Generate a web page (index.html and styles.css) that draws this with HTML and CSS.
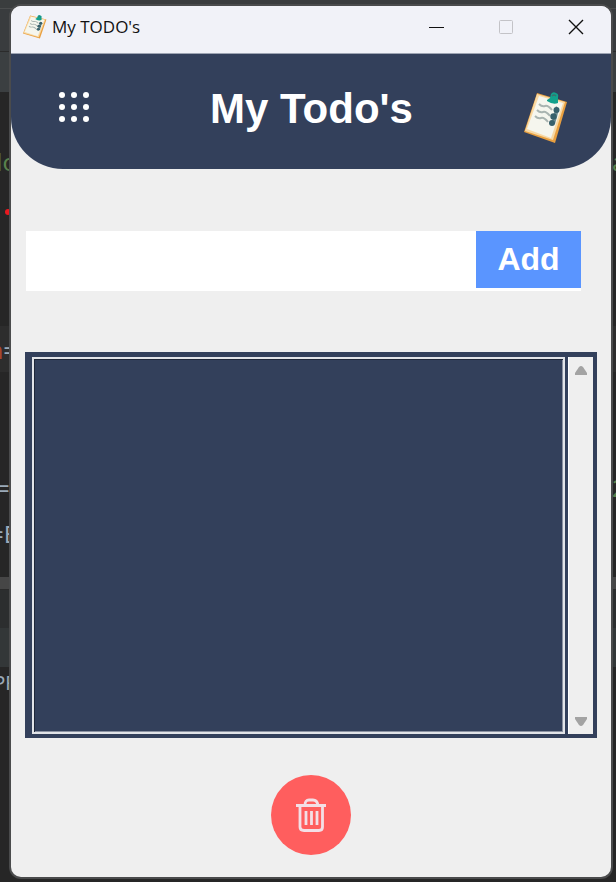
FILE: index.html
```html
<!DOCTYPE html>
<html lang="en">
<head>
<meta charset="utf-8">
<title>My TODO's</title>
<link rel="stylesheet" href="styles.css">
</head>
<body>
<svg class="defs" aria-hidden="true">
  <symbol id="clipboard" viewBox="0 0 44 52" preserveAspectRatio="none">
    <path d="M13 1 43 10 31 51 0 40Z" fill="#e9a040"/>
    <path d="M13 2 41 10 29 48 1 39Z" fill="#f8d9a4"/>
    <path d="M15 4 39 11 27 46 3 37Z" fill="#f5f6ee"/>
    <path d="M23 8 26 6 27 2Q29 -1 32 1Q35 2 34 5L34 11Q29 13 23 9Z" fill="#12a18c"/>
    <path d="M28 4Q30 2 32 4" fill="none" stroke="#39736f" stroke-width="1.6"/>
    <path d="M15 12Q18 15 21 14T28 18M13 18Q16 21 19 20T26 24M11 24Q14 27 17 26T24 30" fill="none" stroke="#a9b4b0" stroke-width="2"/>
    <g fill="#38616c"><circle cx="32.500" cy="18" r="3"/><circle cx="29.500" cy="24.500" r="3.2"/><circle cx="28" cy="31" r="3"/><path d="M32 14 35 17 33 25 31 32 27 33 29 25Z" opacity=".7"/></g>
  </symbol>
</svg>
<div class="backdrop" aria-hidden="true">
  <div class="band band-menu"></div>
  <div class="band band-tools"></div>
  <div class="band band-tabs"></div>
  <div class="band band-code code-1"><span class="edge green">lo</span><span class="far green">a</span></div>
  <div class="band band-code code-2"><span class="dot"></span></div>
  <div class="band band-line"><span class="edge"><b class="orange">n</b>=</span></div>
  <div class="band band-code code-3"></div>
  <div class="band band-code code-4"><span class="edge">=(</span><span class="far green">2</span></div>
  <div class="band band-code code-5"><span class="edge">=E</span></div>
  <div class="band band-split"></div>
  <div class="band band-panel"></div>
  <div class="band band-head"></div>
  <div class="band band-code code-6"><span class="edge small">PR</span></div>
</div>
<div class="window">
  <div class="titlebar">
    <svg class="app-icon" aria-hidden="true"><use href="#clipboard"/></svg>
    <span class="caption">My TODO's</span>
    <button class="control" aria-label="Minimize"><svg viewBox="0 0 16 16"><path d="M1 8.5H16" stroke="#111"/></svg></button>
    <button class="control" aria-label="Maximize" disabled><svg viewBox="0 0 16 16"><rect x="1.5" y="1.5" width="13" height="13" rx="1" fill="none" stroke="#c3c3c7"/></svg></button>
    <button class="control" aria-label="Close"><svg viewBox="0 0 16 16"><path d="M1 1 15 15M15 1 1 15" stroke="#111" stroke-width="1.4"/></svg></button>
  </div>
  <header class="header">
    <svg class="grid-icon" viewBox="0 0 30 30" aria-hidden="true" fill="#fff">
      <circle cx="3" cy="3" r="3"/><circle cx="15" cy="3" r="3"/><circle cx="27" cy="3" r="3"/>
      <circle cx="3" cy="15" r="3"/><circle cx="15" cy="15" r="3"/><circle cx="27" cy="15" r="3"/>
      <circle cx="3" cy="27" r="3"/><circle cx="15" cy="27" r="3"/><circle cx="27" cy="27" r="3"/>
    </svg>
    <h1>My Todo's</h1>
    <svg class="header-icon" aria-hidden="true"><use href="#clipboard"/></svg>
  </header>
  <main class="content">
    <form class="entry">
      <input type="text" aria-label="New task">
      <button type="button">Add</button>
    </form>
    <div class="tasks">
      <ul class="list" aria-label="Tasks"></ul>
      <div class="scrollbar">
        <button aria-label="Scroll up"><svg viewBox="0 0 12 9"><path d="M6 0Q7 0 8 1L12 7V9H0V7L4 1Q5 0 6 0Z" fill="#a3a3a3"/></svg></button>
        <button aria-label="Scroll down"><svg viewBox="0 0 12 9"><path d="M6 9Q7 9 8 8L12 2V0H0V2L4 8Q5 9 6 9Z" fill="#a3a3a3"/></svg></button>
      </div>
    </div>
    <button class="delete" aria-label="Delete task">
      <svg viewBox="0 0 30 34" fill="none" stroke="#f3dfe6" stroke-width="2.8">
        <path d="M0 7.5H30M9 7Q9 2 13 2H17Q21 2 22 7M4 8V29Q4 32.500 8 32.500H23Q26.500 32.500 26.500 29V8"/>
        <path d="M10 13V27M15.500 13V27M21 13V27"/>
      </svg>
    </button>
  </main>
</div>
</body>
</html>
```
FILE: styles.css
```css
* { box-sizing: border-box; }

body {
  margin: 0;
  background: #262626;
  font-family: "Liberation Sans", Arial, sans-serif;
}

button {
  margin: 0;
  padding: 0;
  border: 0;
  background: none;
}

svg { display: block; }

.defs {
  position: absolute;
  width: 0;
  height: 0;
}

/* Editor behind the window */
.backdrop {
  position: absolute;
  inset: 0;
  z-index: -1;
  display: flex;
  flex-direction: column;
  overflow: hidden;
  color: #9aaab8;
  font: 24px/32px "Noto Sans", sans-serif;
  white-space: nowrap;
}

.band {
  display: flex;
  justify-content: space-between;
  flex-shrink: 0;
  overflow: hidden;
}

.band-menu { height: 9px; background: #3a3d3e; border-bottom: 1px solid #4b4d4e; }
.band-tools { height: 43px; background: #393c3e; border-bottom: 1px solid #2b2b2b; }
.band-tabs { height: 40px; background: #3b3f41; }
.band-code { background: #262626; }
.band-line { height: 46px; padding-top: 8px; background: #2d2d2d; }
.band-split { height: 13px; background: #464646; border-bottom: 1px solid #2b2b2b; }
.band-panel { height: 38px; background: #2c2e2f; }
.band-head { height: 39px; background: #333738; }
.code-1 { height: 108px; padding-top: 54px; }
.code-2 { height: 126px; padding-top: 9px; }
.code-3 { height: 100px; }
.code-4 { height: 46px; }
.code-5 { height: 59px; }
.code-6 { flex: 1; }

.edge {
  display: flex;
  justify-content: flex-end;
  width: 17px;
}

.edge.small { font-size: 19px; }
.far { width: 4px; }
.green { color: #59814d; }
.orange { color: #a8482a; font-weight: normal; }

.dot {
  width: 6px;
  height: 6px;
  margin-left: 5px;
  border-radius: 50%;
  background: #e8191f;
}

/* Window */
.window {
  display: flex;
  flex-direction: column;
  min-height: calc(100vh - 11px);
  margin: 6px 5px 5px 11px;
  overflow: hidden;
  border-radius: 10px;
  background: #efefef;
  box-shadow: 0 0 0 2px #4a4b4c;
}

.titlebar {
  display: flex;
  align-items: center;
  height: 48px;
  padding: 0 0 5px 12px;
  border-bottom: 1px solid #9da4b3;
  background: #f1f2f8;
}

.app-icon {
  width: 24px;
  height: 24px;
}

.caption {
  flex: 1;
  padding-left: 5px;
  color: #111;
  font: 17px/24px "Open Sans", sans-serif;
}

.control {
  display: grid;
  place-items: center;
  width: 70px;
  height: 40px;
}

.control svg {
  width: 16px;
  height: 16px;
}

.header {
  display: grid;
  grid-template-columns: 40px 1fr 44px;
  align-items: center;
  height: 115px;
  padding: 0 43px 0 48px;
  border-radius: 0 0 52px 52px;
  background: #33405b;
}

.grid-icon {
  width: 30px;
  height: 30px;
  margin-bottom: 10px;
}

.header h1 {
  margin: 0 0 6px;
  color: #fff;
  font-size: 42px;
  line-height: 48px;
  text-align: center;
}

.header-icon {
  width: 44px;
  height: 52px;
  margin-top: 13px;
}

.content {
  display: flex;
  flex: 1;
  flex-direction: column;
  padding: 62px 14px 22px;
}

.entry {
  display: flex;
  height: 60px;
  margin: 0 16px 0 1px;
  padding-bottom: 3px;
  background: #fff;
}

.entry input {
  flex: 1;
  min-width: 0;
  padding: 0 8px;
  border: 0;
  outline: 0;
  background: #fff;
  font: 24px "Liberation Sans", Arial, sans-serif;
}

.entry button {
  width: 105px;
  background: #5a95ff;
  color: #fff;
  font: bold 32px "Liberation Sans", Arial, sans-serif;
}

.tasks {
  display: flex;
  flex: 1;
  gap: 3px;
  min-height: 200px;
  margin: 61px 0 37px;
  padding: 5px 4px 4px 7px;
  background: #33405b;
}

.list {
  flex: 1;
  margin: 0;
  padding: 0;
  border: 2px solid #e2e4e8;
  background: #33405b;
  box-shadow: inset 1px 1px #1f2738, inset -1px -1px #8c93a3;
  list-style: none;
}

.scrollbar {
  display: flex;
  flex-direction: column;
  justify-content: space-between;
  width: 25px;
  border-left: 1px solid #fff;
  background: #efefef;
}

.scrollbar button {
  display: grid;
  place-items: center;
  height: 26px;
}

.scrollbar svg {
  width: 12px;
  height: 9px;
}

.delete {
  display: grid;
  place-items: center;
  align-self: center;
  width: 80px;
  height: 80px;
  border-radius: 50%;
  background: #ff5e5e;
}

.delete svg {
  width: 30px;
  height: 34px;
}
```
